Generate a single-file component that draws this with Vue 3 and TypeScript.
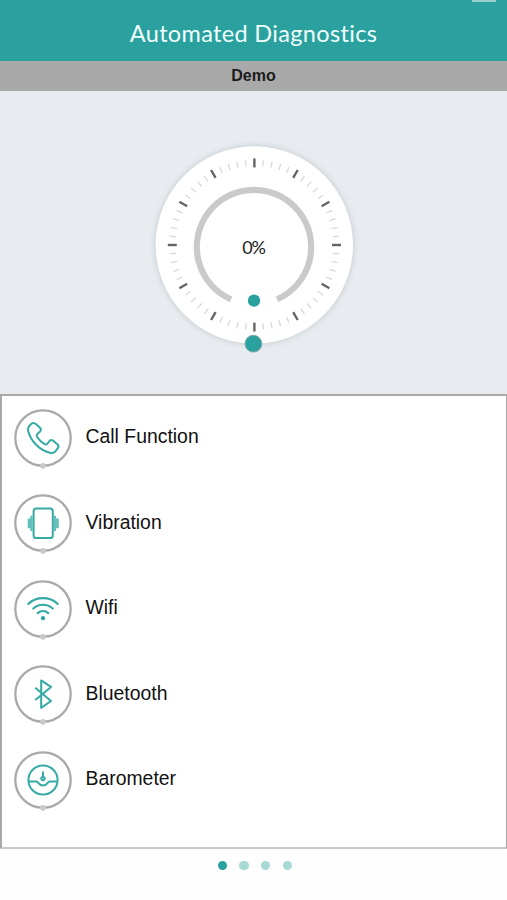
<script setup lang="ts">
type IconName = 'call' | 'vibration' | 'wifi' | 'bluetooth' | 'barometer'

interface Test {
  icon: IconName
  label: string
}

const tests: Test[] = [
  { icon: 'call', label: 'Call Function' },
  { icon: 'vibration', label: 'Vibration' },
  { icon: 'wifi', label: 'Wifi' },
  { icon: 'bluetooth', label: 'Bluetooth' },
  { icon: 'barometer', label: 'Barometer' },
]

const ticks = Array.from({ length: 60 }, (_, i) => ({ angle: i * 6, major: i % 5 === 0 }))
const pages = 4
const currentPage = 1
const progress = 0
</script>

<template>
  <main class="screen">
    <header class="header">
      <h1 class="title">Automated Diagnostics</h1>
      <span class="handle"></span>
    </header>
    <div class="mode">Demo</div>

    <section class="gauge-area">
      <svg class="gauge" width="220" height="220" viewBox="144 135 220 220">
        <circle class="dial" cx="254.3" cy="245" r="98.7" />
        <line
          v-for="t in ticks"
          :key="t.angle"
          :class="t.major ? 'tick major' : 'tick'"
          x1="254.4"
          x2="254.4"
          :y1="t.major ? 158.4 : 159.8"
          :y2="t.major ? 167.4 : 166.2"
          :transform="`rotate(${t.angle} 254.4 245)`"
        />
        <path class="track" d="M231 299.4A57.2 57.2 0 1 1 277 299.4" />
        <circle class="dot" cx="254" cy="300.6" r="6.2" />
        <circle class="knob" cx="253.4" cy="343.7" r="8.4" />
        <text class="percent" x="253.6" y="253.7" text-anchor="middle">{{ progress }}%</text>
      </svg>
    </section>

    <ul class="tests">
      <li v-for="test in tests" :key="test.icon" class="test">
        <svg class="badge" width="60" height="62" viewBox="-30 -30 60 62">
          <circle class="ring" r="27.7" />
          <circle class="pin" cx="0" cy="27.8" r="2.9" />
          <g class="glyph">
            <path
              v-if="test.icon === 'call'"
              d="M-11.6 -14.2C-10 -15.4 -8.3 -15.2 -7.1 -13.9L-3 -10.2C-1.8 -8.9 -1.9 -7.5 -3.1 -6.3L-5.5 -4.2C-6.5 -3.3 -6.6 -2.4 -6 -1.3C-3.9 2 -1.5 4.4 1.6 6.2C2.7 6.8 3.7 6.6 4.5 5.6L6.5 3C7.6 1.8 8.9 1.7 10.2 2.7L14.3 6.3C15.7 7.5 15.9 9 14.8 10.4L12.5 13.2C11 14.8 9 15.4 6.7 14.8C-3 12.2 -12 3.6 -14.6 -6.2C-15.2 -8.4 -14.8 -10.8 -13.5 -12.3Z"
            />
            <template v-else-if="test.icon === 'vibration'">
              <rect x="-9.4" y="-14.4" width="19.2" height="29.4" rx="2.6" />
              <path class="solid" d="M-10.3 -7.3H-12.7V-4.4H-15.3V5.2H-12.7V8H-10.3ZM10.6 -7.3H13V-4.4H15.8V5.2H13V8H10.6Z" />
            </template>
            <template v-else-if="test.icon === 'wifi'">
              <path class="wave" d="M-14.6 -5.1C-6.4 -12.7 6.4 -12.7 14.6 -5.1M-9.7 -.5C-4.2 -5.5 4.2 -5.5 9.7 -.5M-5.3 4.1C-2.3 1.3 2.3 1.3 5.3 4.1" />
              <circle class="solid dark" cx="0" cy="9.2" r="2.1" />
            </template>
            <path
              v-else-if="test.icon === 'bluetooth'"
              d="M-7.7 -6.2L8 7L-1.8 13.9V-13.6L8 -7.1L-7.7 5.9"
            />
            <template v-else>
              <circle r="14.6" />
              <path d="M-14.6 1.6H-6.6C-4.2 1.6 -4.6 5.6 0 5.6S4.2 1.6 6.6 1.6H14.6M0 -8.4V-3.2" />
              <circle cx="0" cy="-1.4" r="1.7" />
            </template>
          </g>
        </svg>
        <span class="label">{{ test.label }}</span>
      </li>
    </ul>

    <nav class="pager">
      <span v-for="p in pages" :key="p" :class="['page', { active: p === currentPage }]"></span>
    </nav>
  </main>
</template>

<style>
body {
  margin: 0;
  background: #fefefe;
}
</style>

<style scoped>
.screen {
  width: 507px;
  height: 900px;
  display: flex;
  flex-direction: column;
  overflow: hidden;
  background: #fefefe;
  font-family: "Liberation Sans", Arial, sans-serif;
}
.header {
  position: relative;
  flex: none;
  height: 61px;
  box-sizing: border-box;
  padding-top: 19px;
  background: #2aa19f;
  text-align: center;
}
.title {
  margin: 0;
  font: 400 23.5px/28px Lato, sans-serif;
  letter-spacing: 0.33px;
  color: #f0fffd;
}
.handle {
  position: absolute;
  top: 0;
  right: 11px;
  width: 24px;
  height: 2px;
  background: #95d0cf;
}
.mode {
  flex: none;
  height: 30px;
  background: #a9a9a9;
  color: #1c1c1c;
  font-size: 16px;
  font-weight: 700;
  line-height: 29px;
  text-align: center;
}
.gauge-area {
  flex: none;
  height: 303px;
  box-sizing: border-box;
  padding-top: 44px;
  padding-left: 144px;
  background: #e8ecf0;
}
.gauge {
  display: block;
}
.dial {
  fill: #fff;
  filter: drop-shadow(0 0 3px rgba(90, 100, 105, 0.28));
}
.tick {
  stroke: #d9d9d9;
  stroke-width: 1.3;
}
.major {
  stroke: #656565;
  stroke-width: 2.4;
}
.track {
  fill: none;
  stroke: #cacaca;
  stroke-width: 6.2;
}
.dot {
  fill: #2aa19f;
}
.knob {
  fill: #2aa19f;
  stroke: #7ea6a8;
  stroke-width: 1;
}
.percent {
  font: 400 18px Lato, sans-serif;
  letter-spacing: -1px;
  fill: #222;
}
.tests {
  flex: none;
  height: 455px;
  box-sizing: border-box;
  margin: 0;
  padding: 11.5px 0 0 11px;
  list-style: none;
  background: #fff;
  border: 2px solid #a8a8a8;
  border-right-width: 1px;
  border-bottom-color: #c9c9c9;
}
.test {
  display: flex;
  align-items: flex-start;
  gap: 12.5px;
  height: 85.5px;
}
.badge {
  flex: none;
}
.ring {
  fill: none;
  stroke: #aaa;
  stroke-width: 2.3;
}
.pin {
  fill: #c9c9c9;
}
.glyph {
  fill: none;
  stroke: #35aaa5;
  stroke-width: 2;
  stroke-linejoin: round;
}
.solid {
  fill: #63bfb8;
  stroke: none;
}
.dark {
  fill: #2aa19f;
}
.wave {
  stroke-width: 2.2;
  stroke-linecap: round;
}
.label {
  padding-top: 16.8px;
  font-size: 19.4px;
  line-height: 24px;
  color: #111;
}
.pager {
  display: flex;
  gap: 12.3px;
  padding: 11.6px 0 0 217.6px;
}
.page {
  width: 9.4px;
  height: 9.4px;
  border-radius: 50%;
  background: #a9d9d5;
}
.active {
  background: #2aa19f;
}
</style>
